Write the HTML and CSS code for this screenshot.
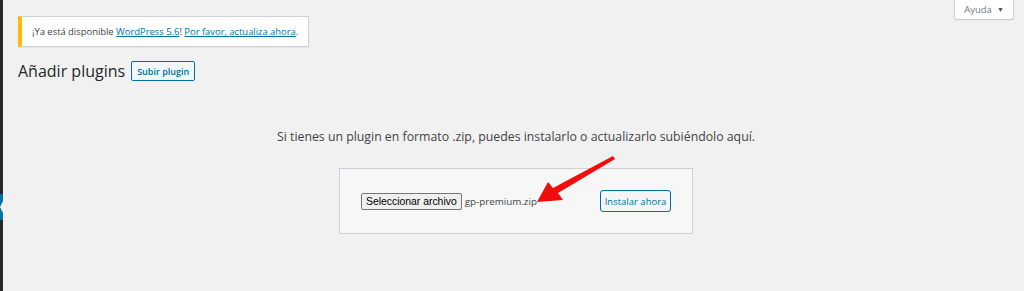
FILE: index.html
```html
<!DOCTYPE html>
<html lang="es">
<head>
<meta charset="utf-8">
<title>Añadir plugins</title>
<link rel="stylesheet" href="styles.css">
</head>
<body>
<div class="layout">
  <aside class="sidebar">
    <div class="menu-current"><span class="notch"></span></div>
  </aside>
  <main class="content">
    <div class="top-row">
      <div class="update-nag">¡Ya está disponible <a href="#">WordPress 5.6</a>! <a href="#">Por favor, actualiza ahora</a>.</div>
      <button class="help-tab">Ayuda <span class="caret">▼</span></button>
    </div>
    <div class="title-row">
      <h1 class="page-title">Añadir plugins</h1>
      <button class="title-action">Subir plugin</button>
    </div>
    <p class="install-help">Si tienes un plugin en formato .zip, puedes instalarlo o actualizarlo subiéndolo aquí.</p>
    <div class="upload-wrap">
      <div class="upload-box">
        <div class="file-field">
          <button class="file-button">Seleccionar archivo</button>
          <span class="file-name">gp-premium.zip</span>
        </div>
        <button class="install-button">Instalar ahora</button>
        <svg class="arrow" width="90" height="50" viewBox="0 0 90 50">
          <polygon points="0,46 11,26 16,32 76,0 78,3 21,37 26,44" fill="#f20d0d"/>
        </svg>
      </div>
    </div>
  </main>
</div>
</body>
</html>
```

FILE: styles.css
```css
html, body {
  margin: 0;
  padding: 0;
  background: #f1f1f1;
}
body {
  font-family: "Open Sans", "Noto Sans", sans-serif;
  color: #444;
  height: 291px;
  overflow: hidden;
}
.layout {
  display: flex;
  height: 291px;
}
.sidebar {
  width: 3px;
  flex: none;
  background: #23282d;
  display: flex;
  flex-direction: column;
  padding-top: 194px;
  box-sizing: border-box;
}
.menu-current {
  height: 26px;
  background: #0073aa;
  display: flex;
  justify-content: flex-end;
  align-items: center;
}
.notch {
  width: 0;
  height: 0;
  border-right: 3px solid #f1f1f1;
  border-top: 6px solid transparent;
  border-bottom: 6px solid transparent;
}
.content {
  flex: 1;
  padding: 0 10px 0 15px;
  min-width: 0;
}
.top-row {
  display: flex;
  align-items: flex-start;
}
.update-nag {
  margin-top: 16px;
  background: #fff;
  border: 1px solid #ccd0d4;
  border-left: 4px solid #ffb900;
  box-shadow: 0 1px 1px rgba(0,0,0,.04);
  padding: 0 10px 0 10px;
  height: 29px;
  line-height: 29px;
  font-size: 9.5px;
  letter-spacing: -0.05px;
  color: #444;
  white-space: nowrap;
}
.update-nag a {
  color: #0073aa;
  text-decoration: underline;
}
.help-tab {
  margin-left: auto;
  width: 60px;
  height: 20px;
  box-sizing: border-box;
  background: #fff;
  border: 1px solid #ccd0d4;
  border-top: none;
  border-radius: 0 0 3px 3px;
  box-shadow: 0 1px 1px rgba(0,0,0,.04);
  font-family: "Open Sans", "Noto Sans", sans-serif;
  font-size: 9.5px;
  color: #72777c;
  padding: 0 0 1px 0;
  display: flex;
  align-items: center;
  justify-content: center;
  gap: 5px;
}
.caret {
  font-size: 7px;
  color: #555;
}
.title-row {
  display: flex;
  align-items: center;
  gap: 6px;
  margin-top: 14px;
}
.page-title {
  margin: 0;
  font-size: 16px;
  font-weight: 400;
  color: #23282d;
  line-height: 20px;
}
.title-action {
  height: 20px;
  box-sizing: border-box;
  border: 1px solid #0071a1;
  border-radius: 2px;
  background: #f3f5f6;
  color: #0071a1;
  font-family: "Open Sans", "Noto Sans", sans-serif;
  font-size: 9px;
  font-weight: 600;
  padding: 0 5px;
}
.install-help {
  margin: 48px 0 0 0;
  text-align: center;
  font-size: 12.3px;
  line-height: 16px;
  color: #444;
}
.upload-wrap {
  display: flex;
  justify-content: center;
  margin-top: 23px;
}
.upload-box {
  position: relative;
  width: 354px;
  height: 66px;
  box-sizing: border-box;
  background: #f7f7f7;
  border: 1px solid #ccd0d4;
  display: flex;
  align-items: center;
  justify-content: space-between;
  padding: 0 21px 0 21px;
}
.file-field {
  display: flex;
  align-items: center;
  gap: 3px;
}
.file-button {
  height: 17px;
  box-sizing: border-box;
  font-family: "Liberation Sans", Arial, sans-serif;
  font-size: 10.4px;
  color: #000;
  background: #efefef;
  border: 1px solid #767676;
  border-radius: 2px;
  padding: 0 4px;
}
.file-name {
  font-size: 9.8px;
  color: #444;
}
.install-button {
  width: 71px;
  height: 22px;
  box-sizing: border-box;
  border: 1px solid #0071a1;
  border-radius: 3px;
  background: #f3f5f6;
  color: #0071a1;
  font-family: "Open Sans", "Noto Sans", sans-serif;
  font-size: 9.5px;
  padding: 0;
}
.arrow {
  position: absolute;
  left: 197px;
  top: -13px;
}
```
